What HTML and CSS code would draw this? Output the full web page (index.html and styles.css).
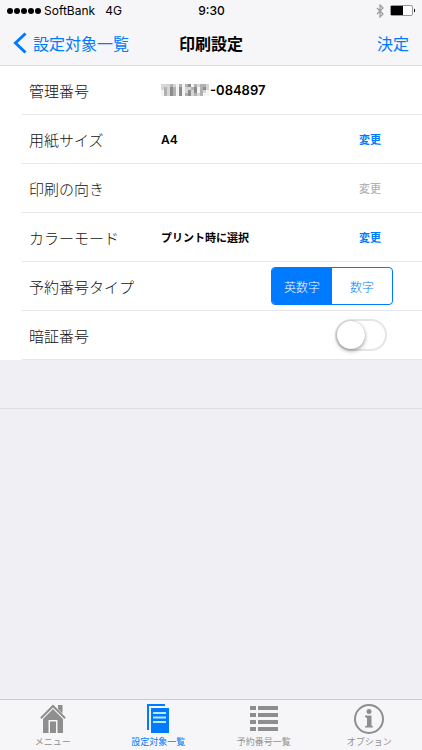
FILE: index.html
```html
<!DOCTYPE html>
<html lang="ja">
<head>
<meta charset="utf-8">
<meta name="viewport" content="width=device-width, initial-scale=1">
<title>印刷設定</title>
<link rel="stylesheet" href="styles.css">
</head>
<body>
<header class="top">
  <div class="status">
    <div class="status-left">
      <svg width="35" height="6" viewBox="0 0 35 6" aria-hidden="true"><circle cx="3" cy="3" r="3"/><circle cx="10" cy="3" r="3"/><circle cx="17" cy="3" r="3"/><circle cx="24" cy="3" r="3"/><circle cx="31" cy="3" r="3"/></svg>
      <span>SoftBank</span>
      <span class="network">4G</span>
    </div>
    <time class="clock">9:30</time>
    <div class="status-right">
      <svg width="8" height="14" viewBox="0 0 8 14" fill="none" stroke="#999" stroke-width="1.200" aria-hidden="true"><path d="M1 4l6 6-3 3V1l3 3-6 6"/></svg>
      <svg width="26" height="12" viewBox="0 0 26 12" aria-hidden="true"><rect x=".5" y=".5" width="22" height="10" rx="1.5" fill="#fff" stroke="#999"/><path d="M1 1h12v9H1z"/><path d="M24 3.500c1.500.5 1.500 3.500 0 4z"/></svg>
    </div>
  </div>
  <nav class="navbar">
    <a class="back" href="#"><svg width="14" height="22" viewBox="0 0 14 22" fill="none" stroke="#007aff" stroke-width="3" aria-hidden="true"><path d="M12.500 1.500L2.500 11l10 9.500"/></svg><span>設定対象一覧</span></a>
    <h1>印刷設定</h1>
    <button class="done" type="button">決定</button>
  </nav>
</header>

<main>
  <div class="list">
    <div class="row">
      <span class="label">管理番号</span>
      <span class="value masked"><svg width="48" height="12" viewBox="0 0 16 4" shape-rendering="crispEdges" aria-hidden="true">
        <path fill="#d6d6d6" d="M0 0h16v4H0z"/>
        <path fill="#f4f4f4" d="M0 2h1v2H0zM5 0h1v4H5zM7 0h1v4H7zM10 0h1v1h-1zM12 1h1v2h-1zM15 2h1v2h-1zM14 3h1v1h-1z"/>
        <path fill="#b2b2b2" d="M1 1h1v3H1zM3 0h1v1H3zM4 1h1v3H4zM6 0h1v1H6zM8 0h1v1H8zM8 3h1v1H8zM10 1h1v1h-1zM11 0h1v1h-1zM13 0h1v4h-1zM14 0h1v1h-1zM11 3h1v1h-1z"/>
        <path fill="#8c8c8c" d="M3 1h1v3H3zM6 1h1v3H6zM9 0h1v1H9zM9 2h1v2H9zM11 1h1v2h-1zM14 1h1v1h-1z"/>
      </svg><span>-084897</span></span>
    </div>
    <div class="row">
      <span class="label">用紙サイズ</span>
      <span class="value">A4</span>
      <button class="change" type="button">変更</button>
    </div>
    <div class="row">
      <span class="label">印刷の向き</span>
      <span class="value"></span>
      <button class="change" type="button" disabled>変更</button>
    </div>
    <div class="row">
      <span class="label">カラーモード</span>
      <span class="value kana">プリント時に選択</span>
      <button class="change" type="button">変更</button>
    </div>
    <div class="row">
      <span class="label" id="number-type">予約番号タイプ</span>
      <div class="segments" role="group" aria-labelledby="number-type">
        <button type="button" aria-pressed="true">英数字</button>
        <button type="button" aria-pressed="false">数字</button>
      </div>
    </div>
    <div class="row">
      <label class="label" for="pin">暗証番号</label>
      <input class="switch" id="pin" type="checkbox" role="switch">
    </div>
  </div>
  <div class="footer-row"></div>
</main>

<nav class="tabs">
  <a href="#">
    <svg width="26" height="30" viewBox="0 0 26 30" fill="#8e8e8e" aria-hidden="true"><path d="M18 1h4.500v8.500L18 5z"/><path d="M13 .5l12.800 13-1.300 1.500L13 3.500 1.500 15 .2 13.500z"/><path d="M13 5l10 10v14h-5.500V16h-9v13H3V15z"/><path d="M10 17.500h6V29h-6z"/></svg>
    <span>メニュー</span>
  </a>
  <a class="current" href="#" aria-current="page">
    <svg width="22" height="30" viewBox="0 0 22 30" fill="#007aff" aria-hidden="true"><path d="M0 0h18v2H2v24H0z"/><path d="M4 4h18v25H4z"/><path stroke="#b8eaff" stroke-width="2" d="M6 9h13M6 13.500h13M6 18h13"/></svg>
    <span>設定対象一覧</span>
  </a>
  <a href="#">
    <svg width="28" height="30" viewBox="0 0 28 30" fill="#8e8e8e" aria-hidden="true"><path d="M0 2h6v4H0zM8 2h20v4H8zM0 9h6v4H0zM8 9h20v4H8zM0 16h6v4H0zM8 16h20v4H8zM0 23h6v4H0zM8 23h20v4H8z"/></svg>
    <span>予約番号一覧</span>
  </a>
  <a href="#">
    <svg width="30" height="30" viewBox="0 0 30 30" fill="#8e8e8e" aria-hidden="true"><circle cx="15" cy="15" r="14" fill="none" stroke="#8e8e8e" stroke-width="2"/><circle cx="15" cy="7.500" r="2.500"/><path d="M11 11.500h6.500V21.500l1.500 1v1h-8v-1l2-1v-7.500l-2-1z"/></svg>
    <span>オプション</span>
  </a>
</nav>
</body>
</html>
```
FILE: styles.css
```css
* { box-sizing: border-box; }

body {
  margin: 0;
  min-height: 100vh;
  display: flex;
  flex-direction: column;
  background: #efeff4;
  color: #000;
  font-family: Inter, "Noto Sans CJK JP", sans-serif;
}

a { color: inherit; text-decoration: none; }

button {
  margin: 0;
  padding: 0;
  border: 0;
  background: none;
  font: inherit;
}

svg { display: block; }

.top {
  background: #f6f6f8;
  border-bottom: 1px solid #dcdcdf;
}

.status {
  height: 21px;
  padding: 0 6px 0 7px;
  display: grid;
  grid-template-columns: 1fr auto 1fr;
  align-items: center;
  font-size: 12px;
}

.status-left, .status-right { display: flex; align-items: center; }
.status-left { gap: 2px; }
.status-right { justify-content: flex-end; gap: 6px; }
.network { margin-left: 8px; }
.clock { font-weight: 500; }

.navbar {
  height: 44px;
  padding: 0 13px;
  display: grid;
  grid-template-columns: 1fr auto 1fr;
  align-items: center;
  font-size: 16px;
}

.back { display: flex; align-items: center; gap: 6px; color: #007aff; }
.navbar h1 { margin: 0; font-size: 16px; font-weight: 600; }
.done { justify-self: end; color: #007aff; }

main { flex: 1; }

.list { padding-left: 22px; background: #fff; }

.row {
  height: 49px;
  padding: 0 29px 0 7px;
  display: flex;
  align-items: center;
  border-bottom: 1px solid #e6e6e9;
}

.label { width: 132px; font-size: 15px; font-weight: 300; color: #111; }
.value { flex: 1; font-size: 12px; font-weight: 600; }
.masked { display: flex; align-items: center; gap: 1px; font-size: 13px; }
.kana { font-size: 11px; }

.change {
  margin-right: 12px;
  color: #007aff;
  font-size: 11px;
  font-weight: 600;
}
.change:disabled { color: #b4b4b4; font-weight: 500; }

.segments {
  width: 122px;
  height: 38px;
  margin-left: auto;
  display: flex;
  border: 1px solid #007aff;
  border-radius: 4px;
  overflow: hidden;
}
.segments button { flex: 1; color: #007aff; font-size: 12px; font-weight: 300; }
.segments button[aria-pressed="true"] { background: #007aff; color: #fff; }

.switch {
  appearance: none;
  width: 52px;
  height: 32px;
  margin: 0 6px 0 auto;
  border: 2px solid #e5e5e5;
  border-radius: 16px;
  background: #fff;
}
.switch::before {
  content: "";
  display: block;
  width: 28px;
  height: 28px;
  border-radius: 50%;
  background: #fff;
  box-shadow: 0 2px 4px rgba(0, 0, 0, .35), 0 0 1px rgba(0, 0, 0, .3);
}
.switch:checked { background: #4cd964; border-color: #4cd964; }
.switch:checked::before { margin-left: 20px; }

.footer-row { height: 49px; border-bottom: 1px solid #dcdce1; }

.tabs {
  height: 51px;
  padding-top: 4px;
  display: grid;
  grid-template-columns: repeat(4, 1fr);
  background: #f6f6f8;
  border-top: 1px solid #cbcbcf;
  color: #929292;
  font-size: 9px;
  line-height: 16px;
}
.tabs a { display: flex; flex-direction: column; align-items: center; }
.tabs .current { color: #007aff; }
```
